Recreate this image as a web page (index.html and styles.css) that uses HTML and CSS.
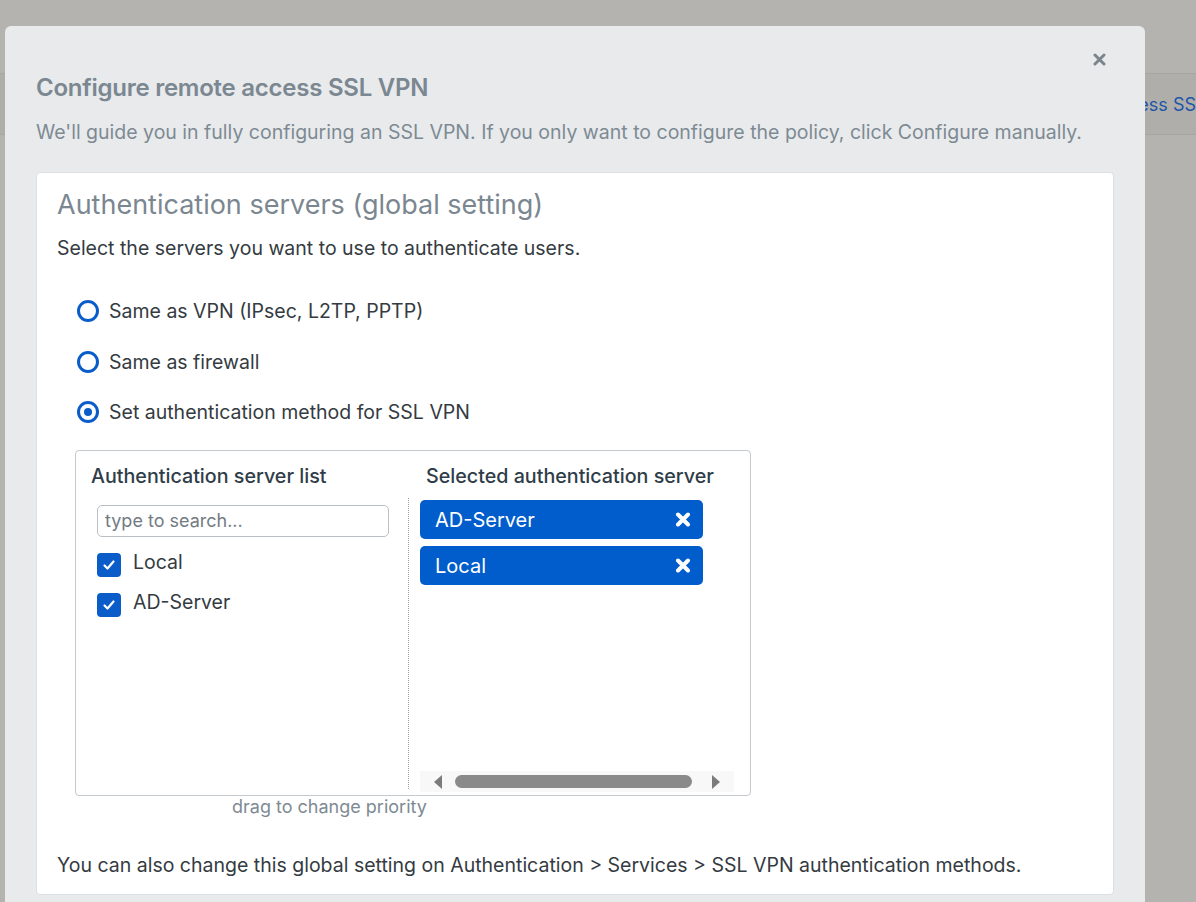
FILE: index.html
```html
<!DOCTYPE html>
<html>
<head>
<meta charset="utf-8">
<link rel="stylesheet" href="styles.css">
</head>
<body>
<div class="page">
  <div class="page-band"><span class="band-link">Remote access SSL VPN</span></div>
</div>

<div class="modal">
  <button class="close" aria-label="Close">
    <svg width="13" height="13" viewBox="0 0 13 13"><path d="M2 2 L11 11 M11 2 L2 11" stroke="#7a858e" stroke-width="3" stroke-linecap="round"/></svg>
  </button>
  <h1 class="modal-title">Configure remote access SSL VPN</h1>
  <p class="modal-sub">We'll guide you in fully configuring an SSL VPN. If you only want to configure the policy, click Configure manually.</p>

  <div class="card">
    <h2 class="card-title">Authentication servers (global setting)</h2>
    <p class="card-text">Select the servers you want to use to authenticate users.</p>

    <div class="radios">
      <label class="radio"><span class="radio-dot"></span>Same as VPN (IPsec, L2TP, PPTP)</label>
      <label class="radio"><span class="radio-dot"></span>Same as firewall</label>
      <label class="radio"><span class="radio-dot checked"></span>Set authentication method for SSL VPN</label>
    </div>

    <div class="picker">
      <div class="picker-head">Authentication server list</div>
      <div class="picker-head right">Selected authentication server</div>
      <div class="picker-left">
        <div class="search">type to search...</div>
        <div class="check-row"><span class="check"><svg width="16" height="16" viewBox="0 0 16 16"><path d="M3.5 8.5 L6.5 11.5 L12.5 4.5" fill="none" stroke="#fff" stroke-width="2.2" stroke-linecap="round" stroke-linejoin="round"/></svg></span><span class="check-label">Local</span></div>
        <div class="check-row"><span class="check"><svg width="16" height="16" viewBox="0 0 16 16"><path d="M3.5 8.5 L6.5 11.5 L12.5 4.5" fill="none" stroke="#fff" stroke-width="2.2" stroke-linecap="round" stroke-linejoin="round"/></svg></span><span class="check-label">AD-Server</span></div>
      </div>
      <div class="picker-right">
        <div class="chips">
          <div class="chip"><span>AD-Server</span><svg width="16" height="15" viewBox="0 0 16 15"><path d="M3 2.5 L13 12.5 M13 2.5 L3 12.5" stroke="#fff" stroke-width="4" stroke-linecap="round"/></svg></div>
          <div class="chip"><span>Local</span><svg width="16" height="15" viewBox="0 0 16 15"><path d="M3 2.5 L13 12.5 M13 2.5 L3 12.5" stroke="#fff" stroke-width="4" stroke-linecap="round"/></svg></div>
        </div>
        <div class="hscroll">
          <span class="arrow left"></span>
          <span class="thumb"></span>
          <span class="arrow right"></span>
        </div>
      </div>
    </div>
    <p class="hint">drag to change priority</p>

    <p class="card-foot">You can also change this global setting on Authentication &gt; Services &gt; SSL VPN authentication methods.</p>
  </div>
</div>
</body>
</html>
```

FILE: styles.css
```css
html, body {
  margin: 0;
  padding: 0;
  height: 100%;
  overflow: hidden;
}
body {
  background: #b4b3af;
  font-family: Inter, "Noto Sans", sans-serif;
  color: #343b41;
}
.page {
  padding-top: 73px;
}
.page-band {
  height: 60px;
  border-top: 1px solid #a7a6a2;
  border-bottom: 1px solid #a7a6a2;
  background: #afaeaa;
  display: flex;
  align-items: center;
  padding-left: 1038px;
  white-space: nowrap;
}
.band-link {
  color: #1d56a8;
  font-size: 18px;
}
.modal {
  position: absolute;
  left: 5px;
  top: 26px;
  width: 1140px;
  height: 900px;
  box-sizing: border-box;
  background: #e8eaec;
  border-radius: 6px;
  padding: 48px 31px 0 31px;
}
.close {
  position: absolute;
  right: 39px;
  top: 27px;
  width: 13px;
  height: 13px;
  padding: 0;
  border: 0;
  background: none;
  display: flex;
}
.modal-title {
  margin: 0;
  font-size: 24px;
  line-height: 28px;
  font-weight: 600;
  color: #7b8791;
  letter-spacing: -0.25px;
}
.modal-sub {
  margin: 17px 0 0 0;
  font-size: 19.5px;
  line-height: 26px;
  color: #7e8a93;
}
.card {
  margin-top: 27px;
  background: #fff;
  border: 1px solid #dde0e3;
  border-radius: 4px;
  padding: 15px 20px 16px 20px;
}
.card-title {
  margin: 0;
  font-size: 27px;
  line-height: 34px;
  font-weight: 400;
  color: #7b8790;
}
.card-text {
  margin: 13px 0 0 0;
  font-size: 19.5px;
  line-height: 26px;
  color: #343b41;
}
.radios {
  margin-top: 37px;
  padding-left: 20px;
  display: flex;
  flex-direction: column;
  gap: 24.5px;
}
.radio {
  display: flex;
  align-items: center;
  gap: 10px;
  font-size: 19.5px;
  line-height: 26px;
  color: #343b41;
}
.radio-dot {
  width: 22px;
  height: 22px;
  box-sizing: border-box;
  border: 3px solid #0a5dc9;
  border-radius: 50%;
  display: flex;
  align-items: center;
  justify-content: center;
}
.radio-dot.checked::after {
  content: "";
  width: 8px;
  height: 8px;
  border-radius: 50%;
  background: #0a5dc9;
}
.picker {
  margin: 25px 0 0 18px;
  width: 676px;
  height: 346px;
  box-sizing: border-box;
  border: 1px solid #c4c9cd;
  border-radius: 4px;
  display: grid;
  grid-template-columns: 332px 1fr;
  grid-template-rows: 47px 1fr;
}
.picker-head {
  padding: 12px 0 0 15px;
  font-size: 19.7px;
  line-height: 26px;
  font-weight: 500;
  color: #2f3d48;
}
.picker-head.right {
  padding-left: 18px;
}
.picker-left {
  padding: 7px 0 0 21px;
}
.search {
  width: 292px;
  height: 32px;
  box-sizing: border-box;
  border: 1px solid #b9bfc4;
  border-radius: 5px;
  padding-left: 7px;
  font-size: 18px;
  line-height: 30px;
  color: #737b82;
}
.check-row {
  display: flex;
  align-items: flex-start;
  gap: 12px;
  height: 24px;
  margin-top: 16px;
  font-size: 19.5px;
  color: #343b41;
}
.check-label {
  line-height: 18px;
}
.check {
  width: 24px;
  height: 24px;
  border-radius: 4px;
  background: #0a5dc9;
  display: flex;
  align-items: center;
  justify-content: center;
}
.picker-right {
  border-left: 1px dotted #9aa0a5;
  margin-bottom: 6px;
  padding: 2px 17px 0 11px;
  display: flex;
  flex-direction: column;
}
.chips {
  flex: 1;
  display: flex;
  flex-direction: column;
  gap: 7px;
}
.chip {
  width: 283px;
  height: 39px;
  box-sizing: border-box;
  background: #005dcb;
  border-radius: 5px;
  padding: 0 12px 0 15px;
  display: flex;
  align-items: center;
  justify-content: space-between;
  color: #fff;
  font-size: 20px;
}
.hscroll {
  height: 21px;
  background: #f8f8f8;
  display: flex;
  align-items: center;
  padding: 0 14px 0 14px;
  margin-bottom: -3px;
}
.arrow {
  width: 0;
  height: 0;
  border-top: 7px solid transparent;
  border-bottom: 7px solid transparent;
}
.arrow.left {
  border-right: 8px solid #7b7b7b;
}
.arrow.right {
  border-left: 8px solid #7b7b7b;
  margin-left: 20px;
}
.thumb {
  width: 237px;
  height: 13px;
  border-radius: 7px;
  background: #8a8a8a;
  margin-left: 13px;
}
.hint {
  margin: 0;
  padding-left: 175px;
  font-size: 18px;
  line-height: 22px;
  color: #7e8a93;
}
.card-foot {
  margin: 34px 0 0 0;
  font-size: 19.5px;
  line-height: 26px;
  color: #343b41;
}
```
